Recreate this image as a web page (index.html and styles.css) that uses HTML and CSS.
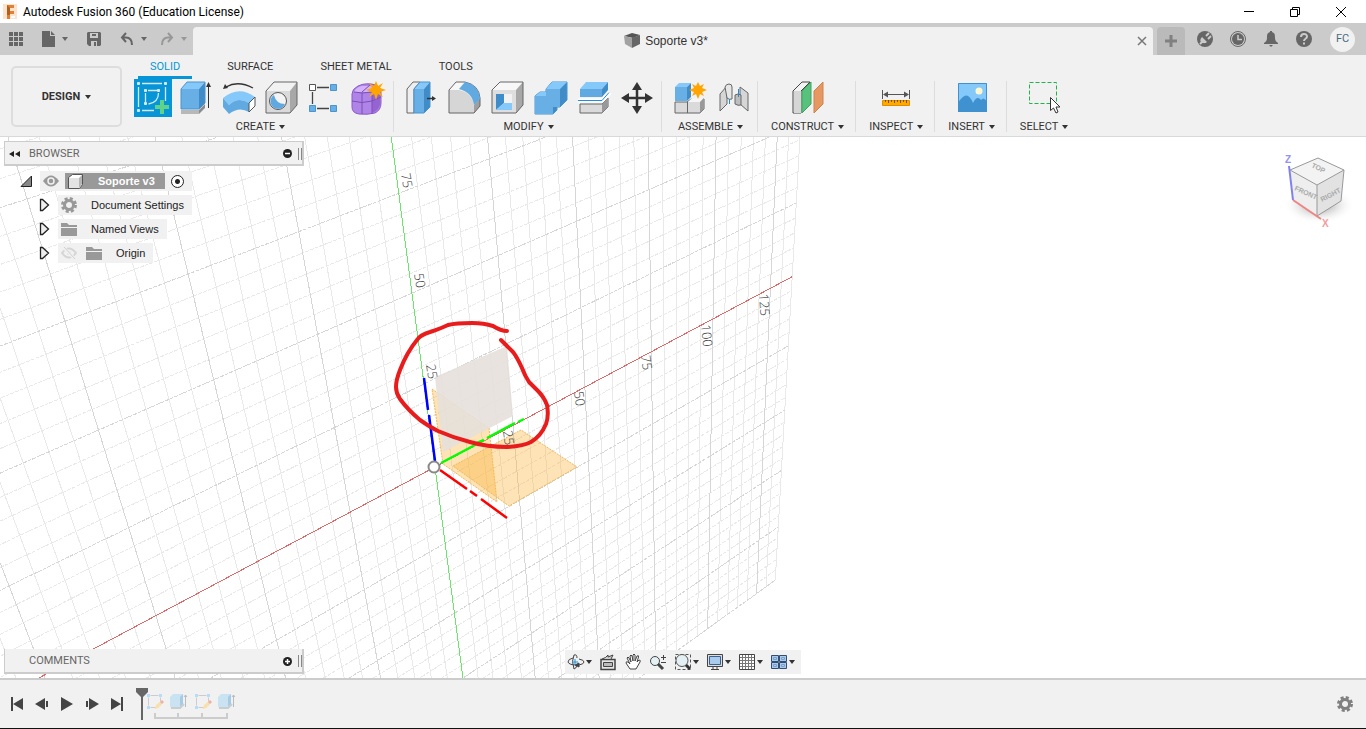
FILE: index.html
```html
<!DOCTYPE html>
<html lang="en">
<head>
    <meta charset="UTF-8">
    <meta name="viewport" content="width=device-width, initial-scale=1.0">
    <title>Autodesk Fusion 360 (Education License)</title>
    <link rel="stylesheet" href="styles.css">
</head>
<body>
    <header class="titlebar">
        <svg class="appIcon" width="16" height="16" viewBox="0 0 16 16">
            <path d="M0 0h14v15H0z" fill="#fbe3cd"/>
            <path d="M4 1h7v3H7v3h4v3H7v5H4z" fill="#dd8236"/>
            <path d="M4 1l3 3v7H4z" fill="#b4601c"/><path d="M8 12h4v2H8z" fill="#fff"/>
        </svg>
        <h1>Autodesk Fusion 360 (Education License)</h1>
        <div class="winBtns">
            <button aria-label="Minimize"><svg width="12" height="12"><path d="M1 5.500h10" stroke="#000"/></svg></button>
            <button aria-label="Restore"><svg width="12" height="12" fill="none" stroke="#000"><path d="M1.500 3.500h7v7h-7zM3.500 3V1.500h7v7H9"/></svg></button>
            <button aria-label="Close"><svg width="12" height="12"><path d="M1 1l10 10M11 1L1 11" stroke="#000"/></svg></button>
        </div>
    </header>

    <div class="tabStrip">
        <div class="quick">
            <button aria-label="Data panel"><svg width="14" height="14" fill="#666"><path d="M0 0h4v4H0zM5 0h4v4H5zM10 0h4v4h-4zM0 5h4v4H0zM5 5h4v4H5zM10 5h4v4h-4zM0 10h4v4H0zM5 10h4v4H5zM10 10h4v4h-4z"/></svg></button>
            <button aria-label="File"><svg width="13" height="16" fill="#666"><path d="M0 0h8v5h5v11H0z"/><path d="M9 0l4 4H9z"/></svg><span class="caret"></span></button>
            <button aria-label="Save"><svg width="14" height="14" fill="#666"><path fill-rule="evenodd" d="M1 0h12l1 1v12l-1 1H2l-2-2V1zM3 1v5h8V1zM4 9v5h6V9z"/><path d="M5 2h4v2H5zM7 10h2v4H7z"/></svg></button>
            <button aria-label="Undo"><svg width="14" height="14" fill="none" stroke="#666" stroke-width="2"><path d="M6 1L2 5.500 6 10M2 5.500h4q6 0 6 7.500"/></svg><span class="caret"></span></button>
            <button class="off" aria-label="Redo"><svg width="14" height="14" fill="none" stroke="#666" stroke-width="2"><path d="M8 1l4 4.500L8 10M12 5.500H8Q2 5.500 2 13"/></svg><span class="caret"></span></button>
        </div>
        <div class="docTab">
            <div class="docName">
                <svg width="16" height="16"><path d="M0 3l8-3 8 2-7 3z" fill="#555"/><path d="M0 3l8 2v10l-7-4z" fill="#a2a2a2"/><path d="M8 5l8-3v9l-8 4z" fill="#666"/></svg>
                <span>Soporte v3*</span>
            </div>
            <button aria-label="Close tab"><svg width="10" height="10"><path d="M1 1l8 8M9 1L1 9" stroke="#777" stroke-width="1.500"/></svg></button>
        </div>
        <button class="newTab" aria-label="New tab"><svg width="14" height="14"><path d="M7 1v12M1 7h12" stroke="#808080" stroke-width="3"/></svg></button>
        <div class="account">
            <button aria-label="Extensions"><svg width="16" height="16"><circle cx="8" cy="8" r="8" fill="#666"/><path d="M3 13l3-3M9 5l3-3M11 8l3-3" stroke="#cbcbcb" stroke-width="2"/><path d="M5 6l5 5c-2 2-5 1-6 0s-1-3 1-5z" fill="#cbcbcb"/></svg></button>
            <button aria-label="Job status"><svg width="16" height="16" fill="none"><circle cx="8" cy="8" r="7.500" stroke="#666"/><circle cx="8" cy="8" r="6" fill="#666"/><path d="M8 4v4.500h4" stroke="#cbcbcb" stroke-width="1.500"/></svg></button>
            <button aria-label="Notifications"><svg width="16" height="16" fill="#666"><path d="M7 0h2v1c3 1 3 3 3 6 0 2 1 4 3 5v1H1v-1c2-1 3-3 3-5 0-3 0-5 3-6zM6 14h4l-2 2z"/></svg></button>
            <button aria-label="Help"><svg width="16" height="16"><circle cx="8" cy="8" r="8" fill="#666"/><path d="M5 6c0-4 6-4 6-.500C11 8 8 7.500 8 10" fill="none" stroke="#cbcbcb" stroke-width="2"/><path d="M7 11.500h2v2H7z" fill="#cbcbcb"/></svg></button>
            <button class="avatar">FC</button>
        </div>
    </div>

    <div class="ribbon">
        <button class="workspace">DESIGN <span class="caret"></span></button>
        <div class="ribbonMain">
            <nav class="ribbonTabs">
                <a href="#" class="active">SOLID</a>
                <a href="#">SURFACE</a>
                <a href="#">SHEET METAL</a>
                <a href="#">TOOLS</a>
            </nav>
            <div class="groups">
                <section class="group">
                    <div class="tools">
                        <button class="picked" aria-label="Create sketch">
                            <svg width="38" height="38" fill="none" stroke="#d8e6ee">
                                <path d="M4.500 8v20M8 4.500h20M31.500 8v14M8 31.500h12M11.500 14v9M14 11.500h9M24.500 14c0 6-4 10-10 11" stroke-width="1.300"/>
                                <path d="M3.500 3.500h2v2h-2zM30.500 3.500h2v2h-2zM3.500 30.500h2v2h-2zM10.500 10.500h2v2h-2zM23.500 10.500h2v2h-2zM10.500 23.500h2v2h-2z" fill="#e4e4e4"/>
                                <path d="M28 21v14M21 28h14" stroke="#5fd38a" stroke-width="4"/>
                            </svg>
                        </button>
                        <button aria-label="Extrude">
                            <svg width="38" height="38" stroke-linejoin="round">
                                <path d="M4 31h18v4H4z" fill="#b8b8b8"/><path d="M22 31l6-6v4l-6 6z" fill="#8c8c8c"/>
                                <path d="M4 10h18v20H4z" fill="#68afe6"/><path d="M4 10l6-7h18l-6 7z" fill="#85c8fa"/><path d="M22 10l6-7v21l-6 6z" fill="#3f8cc8"/>
                                <path d="M4 30V10l6-7h18v21l-6 6z" fill="none" stroke="#4b94cd"/>
                                <path d="M31.500 29V6" stroke="#333"/><path d="M29 8l2.500-5L34 8z" fill="#333"/>
                            </svg>
                        </button>
                        <button aria-label="Revolve">
                            <svg width="38" height="38" stroke-linejoin="round">
                                <path d="M3 19Q19 6 35 18L29 24Q18 17 9 26z" fill="#85c8fa"/>
                                <path d="M3 19l6 7q9-9 20-2v9q-10-6-20 2l-6-7z" fill="#61aae1"/>
                                <path d="M29 24l6-6v9l-6 6z" fill="#fff" stroke="#555"/>
                                <path d="M6 8q12-7 27 1" fill="none" stroke="#333" stroke-width="1.300"/><path d="M3 10l2-5 3 4z" fill="#333"/>
                            </svg>
                        </button>
                        <button aria-label="Hole">
                            <svg width="38" height="38" stroke-linejoin="round">
                                <path d="M3 12l8-9h23l-7 9z" fill="#f2f2f2"/><path d="M3 12h24v22H3z" fill="#dadada"/><path d="M27 12l7-9v23l-7 8z" fill="#a8a8a8"/>
                                <path d="M3 34V12l8-9h23v23l-7 8z" fill="none" stroke="#666"/>
                                <circle cx="15" cy="22" r="8.500" fill="#f4f4f4" stroke="#555"/><path d="M11 16a7.500 7.500 0 1 0 11 9q-9 0-11-9z" fill="#5fa9e0"/>
                            </svg>
                        </button>
                        <button aria-label="Rectangular pattern">
                            <svg width="38" height="38">
                                <path d="M11 8.500h12M11 29.500h12M6.500 13v12" stroke="#444" stroke-width="1.300"/>
                                <path d="M3.500 5.500h6v6h-6z" fill="#fff" stroke="#555"/>
                                <path d="M24.500 5.500h6v6h-6zM3.500 26.500h6v6h-6zM24.500 26.500h6v6h-6z" fill="#68afe6" stroke="#4b94cd"/>
                            </svg>
                        </button>
                        <button aria-label="Create form">
                            <svg width="38" height="38">
                                <path d="M3 15q0-5 6-8 8-4 18-1 5 2 5 8v10q0 7-6 10-8 2-16 1-7-1-7-7z" fill="#b083e8" stroke="#8a5cc8"/>
                                <path d="M5 13q2-5 8-6h14q-2 5-7 6z" fill="#d3b1fb"/><path d="M23 14q5-1 8-6v18q-2 6-8 8z" fill="#9564d2"/>
                                <path d="M3 22q10 3 20 0l9-4M13 14v21M23 14v21M5 13q8 2 18 0M13 13l8-7" fill="none" stroke="#7b50b5"/>
                                <path d="M27 2l2 5 5-3-3 5 6 2-6 2 3 5-5-3-2 6-2-6-5 3 3-5-6-2 6-2-3-5 5 3z" fill="#ffa400"/>
                            </svg>
                        </button>
                    </div>
                    <button class="groupName">CREATE <span class="caret"></span></button>
                </section>

                <section class="group">
                    <div class="tools">
                        <button aria-label="Press pull">
                            <svg width="38" height="38" stroke-linejoin="round">
                                <path d="M5 34V10l6-7h7l-6 7v24z" fill="#eee" stroke="#666"/>
                                <path d="M12 10h10v24H12z" fill="#68afe6"/><path d="M12 10l6-7h10l-6 7z" fill="#85c8fa"/><path d="M22 10l6-7v25l-6 6z" fill="#3f8cc8"/>
                                <path d="M12 34V10l6-7h10v25l-6 6z" fill="none" stroke="#4b94cd"/>
                                <path d="M25 19.500h6" stroke="#333" stroke-width="1.500"/><path d="M30 17l4 2.500-4 2.500z" fill="#333"/>
                            </svg>
                        </button>
                        <button aria-label="Fillet">
                            <svg width="38" height="38" stroke-linejoin="round">
                                <path d="M4 34V11h10q14 3 15 17v6z" fill="#d6d6d6"/><path d="M4 11l7-8h9l-6 8z" fill="#f7f7f7"/><path d="M29 34l6-7v-8l-6 7z" fill="#9f9f9f"/>
                                <path d="M4 34V11l7-8h9q14 3 15 16v8l-6 7z" fill="none" stroke="#666"/>
                                <path d="M14 10l6-7q14 3 15 17l-6 6Q27 13 14 10z" fill="#61aae1"/>
                            </svg>
                        </button>
                        <button aria-label="Shell">
                            <svg width="38" height="38" stroke-linejoin="round">
                                <path d="M4 11l8-8h23l-7 8z" fill="#f7f7f7"/><path d="M4 11h24v23H4z" fill="#dedede"/><path d="M28 11l7-8v23l-7 8z" fill="#a8a8a8"/>
                                <path d="M4 34V11l8-8h23v23l-7 8z" fill="none" stroke="#666"/>
                                <path d="M8 15h16v16H8z" fill="#f2f2f2"/><path d="M8 15h8v9l-8 7z" fill="#3f8cc8"/><path d="M8 31l8-7h8v7z" fill="#85c8fa"/>
                            </svg>
                        </button>
                        <button aria-label="Combine">
                            <svg width="38" height="38" stroke-linejoin="round">
                                <path d="M4 17l5-4h6v-3l6-7h15v18l-7 7h-3v3l-4 4H4z" fill="#3f8cc8" stroke="#4b94cd"/>
                                <path d="M4 17h11v-7h14v18h-7v7H4z" fill="#68afe6"/>
                                <path d="M15 10l6-7h15l-7 7zM4 17l5-4h6v4z" fill="#85c8fa"/>
                            </svg>
                        </button>
                        <button aria-label="Split body">
                            <svg width="38" height="38" stroke-linejoin="round">
                                <path d="M6 10l6-7h22l-6 7z" fill="#85c8fa"/><path d="M6 10h22v8H6z" fill="#61aae1"/><path d="M28 10l6-7v8l-6 7z" fill="#3f8cc8"/>
                                <path d="M6 34v-9h22l6-6v9l-6 6z" fill="#dadada" stroke="#666"/><path d="M28 25l6-6v9l-6 6z" fill="#999"/>
                                <path d="M4 21.500h24l8-8" fill="none" stroke="#fff" stroke-width="4"/><path d="M4 21.500h24l7-8" fill="none" stroke="#1c8ede"/>
                            </svg>
                        </button>
                        <button aria-label="Move">
                            <svg width="38" height="38"><path d="M20 6v26M7 19h26" stroke="#333" stroke-width="2.500"/><path d="M20 3l5 8H15zM20 35l5-8H15zM4 19l8-5v10zM36 19l-8-5v10z" fill="#333"/></svg>
                        </button>
                    </div>
                    <button class="groupName">MODIFY <span class="caret"></span></button>
                </section>

                <section class="group">
                    <div class="tools">
                        <button aria-label="New component">
                            <svg width="38" height="38" stroke-linejoin="round">
                                <path d="M5 34V23h12l4-3h13v10l-4 4z" fill="#dadada" stroke="#666"/><path d="M18 23l4-4h12l-4 4z" fill="#f5f5f5"/><path d="M30 23l4-4v11l-4 4z" fill="#999"/><path d="M17.500 23v11" stroke="#666"/>
                                <path d="M5 8h12v14H5z" fill="#68afe6"/><path d="M5 8l4-4h12l-4 4z" fill="#85c8fa"/><path d="M17 8l4-4v14l-4 4z" fill="#3f8cc8"/>
                                <path d="M28 3l2 4 4-2-2 4 5 2-5 2 2 4-4-2-2 5-2-5-4 2 2-4-5-2 5-2-2-4 4 2z" fill="#ffa400"/>
                            </svg>
                        </button>
                        <button aria-label="Joint">
                            <svg width="38" height="38" stroke="#666" stroke-linejoin="round">
                                <path d="M7 32V15l7-8v18z" fill="#d6d6d6"/><path d="M12 8q1-3 4-3t3 3v12q-3 1-5-1z" fill="#e6e6e6"/>
                                <path d="M27 8l8 6v18l-8-7z" fill="#d6d6d6"/><path d="M22 16q3-2 6 0v10q-3 1-6-1z" fill="#bdbdbd"/>
                                <path d="M16.500 20v5M25.500 10v8" stroke="#1c8ede"/>
                            </svg>
                        </button>
                    </div>
                    <button class="groupName">ASSEMBLE <span class="caret"></span></button>
                </section>

                <section class="group">
                    <div class="tools">
                        <button aria-label="Offset plane">
                            <svg width="38" height="38" stroke-linejoin="round">
                                <path d="M4 34V12l9-9h8l-9 9v22z" fill="#f3f3f3" stroke="#444"/><path d="M5 12h7v22H5z" fill="#d6d6d6"/>
                                <path d="M13 12l9-9v22l-9 9z" fill="#58c27d" stroke="#3da563"/><path d="M25 12l9-9v22l-9 9z" fill="#e59862" stroke="#cd8350"/>
                            </svg>
                        </button>
                    </div>
                    <button class="groupName">CONSTRUCT <span class="caret"></span></button>
                </section>

                <section class="group">
                    <div class="tools">
                        <button aria-label="Measure">
                            <svg width="38" height="38">
                                <path d="M5.500 11v9M32.500 11v9M7 15.500h24" stroke="#555"/><path d="M6 15.500l5-3v6zM32 15.500l-5-3v6z" fill="#555"/>
                                <path d="M5.500 21.500h27v5h-27z" fill="#ffa800" stroke="#e08e00"/><path d="M8.500 21v2M11.500 21v3M14.500 21v2M17.500 21v3M20.500 21v2M23.500 21v3M26.500 21v2M29.500 21v3" stroke="#7a5200"/>
                            </svg>
                        </button>
                    </div>
                    <button class="groupName">INSPECT <span class="caret"></span></button>
                </section>

                <section class="group">
                    <div class="tools">
                        <button aria-label="Insert decal">
                            <svg width="38" height="38">
                                <path d="M5 4h29v29H5z" fill="#85c8fa"/><path d="M5 24q9-15 15 0 4-8 8-3 3-4 6 2v10H5z" fill="#3f92cf"/>
                                <circle cx="26" cy="12" r="3.500" fill="#fff8cf"/><path d="M5.500 4.500h28v28h-28z" fill="none" stroke="#3f92cf"/>
                            </svg>
                        </button>
                    </div>
                    <button class="groupName">INSERT <span class="caret"></span></button>
                </section>

                <section class="group">
                    <div class="tools">
                        <button aria-label="Select">
                            <svg width="38" height="38"><path d="M4.500 3.500h27v21h-27z" fill="none" stroke="#22b14c" stroke-dasharray="4 2"/><path d="M25.500 18.500v13l3-2.500 2.500 5 2-1-2-5h4z" fill="#fff" stroke="#333"/></svg>
                        </button>
                    </div>
                    <button class="groupName">SELECT <span class="caret"></span></button>
                </section>
            </div>
        </div>
    </div>

    <main class="canvas">
        <svg class="scene">
            <g transform="translate(0 -137)">
                <g id="grid"></g>
                <path class="plane" d="M432 389l57 39 8 74-54-38z"/>
                <path class="plane" d="M453 466l68-36 56 37-68 39z"/>
                <path d="M435 377l72-31 6 70-70 36z" fill="#e5e0db" fill-opacity=".9"/>
                <path d="M424 378l4 32M429 415l6 46" stroke="#00f" stroke-width="2.500"/>
                <path d="M441 463l34-18M477 443l7-3M487 438l28-15M518 422l6-3" stroke="#0f0" stroke-width="2.500"/>
                <path d="M440 470l27 19M470 491l7 5M481 499l26 19" stroke="#f00" stroke-width="2.500"/>
                <circle cx="434" cy="467" r="5.500" fill="#fff" stroke="#888" stroke-width="2"/>
                <g class="ticks">
                    <text transform="translate(401 174) rotate(80)">75</text>
                    <text transform="translate(414 274) rotate(80)">50</text>
                    <text transform="translate(426 365) rotate(80)">25</text>
                    <text transform="translate(503 431) rotate(82)">25</text>
                    <text transform="translate(574 392) rotate(82)">50</text>
                    <text transform="translate(641 356) rotate(82)">75</text>
                    <text transform="translate(701 325) rotate(84)">100</text>
                    <text transform="translate(759 294) rotate(86)">125</text>
                </g>
                <path class="marker" d="M507 331Q501 331 493 326 484 323 472 323 456 323 448 325 442 328 430 332 420 335 417 340 407 352 400 370 396 380 396 387 396 393 400 399 408 410 420 420 430 427 438 431 454 438 470 442 487 447 507 447 524 446 531 442 541 436 546 424 549 416 547 405 544 397 538 391L529 382Q525 376 522 368 517 357 513 352L506 345 501 340"/>
            </g>
        </svg>

        <aside class="browser">
            <div class="panelHead">
                <svg width="11" height="6" fill="#222"><path d="M0 3l5-3v6zM6 3l5-3v6z"/></svg>
                <h2>BROWSER</h2>
                <button aria-label="Collapse"><svg width="9" height="9"><circle cx="4.500" cy="4.500" r="4.500" fill="#222"/><path d="M2 4.500h5" stroke="#fff" stroke-width="1.500"/></svg></button>
                <i class="grip"></i>
            </div>
            <ul class="tree">
                <li class="root">
                    <button aria-label="Collapse"><svg width="13" height="13"><path d="M1 11.500L11.500 1v10.500z" fill="#888" stroke="#222"/></svg></button>
                    <div class="node">
                        <svg width="16" height="12"><path d="M0 6q8-11 16 0-8 11-16 0z" fill="#999"/><circle cx="8" cy="6" r="3" fill="none" stroke="#f1f1f1" stroke-width="1.500"/></svg>
                        <span class="rootName">
                            <svg width="17" height="16"><path d="M1.500 4.500l4-3h10v10l-3 4h-11z" fill="#fff" stroke="#555"/><path d="M2 5h10v10H2z" fill="#e3e3e3"/><path d="M12 5l3-3v9l-3 4z" fill="#b5b5b5"/></svg>
                            Soporte v3
                        </span>
                        <input type="radio" name="activeComponent" aria-label="Activate component" checked>
                    </div>
                </li>
                <li>
                    <button aria-label="Expand"><svg width="11" height="14"><path d="M1.500 1.500h2l6 5.500-6 5.500h-2z" fill="#eee" stroke="#222" stroke-width="1.300"/></svg></button>
                    <div class="node">
                        <svg width="16" height="16"><circle cx="8" cy="8" r="4.500" fill="none" stroke="#999" stroke-width="3"/><circle cx="8" cy="8" r="6.500" fill="none" stroke="#999" stroke-width="3" stroke-dasharray="3 2.100"/></svg>
                        <span>Document Settings</span>
                    </div>
                </li>
                <li>
                    <button aria-label="Expand"><svg width="11" height="14"><path d="M1.500 1.500h2l6 5.500-6 5.500h-2z" fill="#eee" stroke="#222" stroke-width="1.300"/></svg></button>
                    <div class="node">
                        <svg width="16" height="13" fill="#999"><path d="M0 0h6l2 2h8v2H0zM0 5h16v8H0z"/></svg>
                        <span>Named Views</span>
                    </div>
                </li>
                <li>
                    <button aria-label="Expand"><svg width="11" height="14"><path d="M1.500 1.500h2l6 5.500-6 5.500h-2z" fill="#eee" stroke="#222" stroke-width="1.300"/></svg></button>
                    <div class="node origin">
                        <svg width="16" height="12" fill="none"><path d="M1 6q7-9 14 0-7 9-14 0z" stroke="#d5d5d5" stroke-width="2"/><circle cx="8" cy="6" r="2" fill="#d5d5d5"/><path d="M2 0l12 12" stroke="#f1f1f1" stroke-width="3"/><path d="M3 0l11 12" stroke="#d0d0d0"/></svg>
                        <svg width="16" height="13" fill="#999"><path d="M0 0h6l2 2h8v2H0zM0 5h16v8H0z"/></svg>
                        <span>Origin</span>
                    </div>
                </li>
            </ul>
        </aside>

        <svg class="viewCube" width="80" height="86">
            <defs>
                <radialGradient id="shade"><stop offset="0" stop-color="#888"/><stop offset="1" stop-color="#fff" stop-opacity="0"/></radialGradient>
            </defs>
            <ellipse cx="39" cy="57" rx="36" ry="19" fill="url(#shade)"/>
            <path d="M10 22l28-12 26 12-27 15z" fill="#f3f3f3"/><path d="M10 22l27 15v31L12 52z" fill="#eeeeee"/><path d="M37 37l27-15-3 31-24 15z" fill="#e2e2e2"/>
            <path d="M10 22l28-12 26 12-27 15zM64 22l-3 31-24 15M37 37v31" fill="none" stroke="#999"/>
            <path d="M9 18l4 34" stroke="#8080ee" stroke-width="2"/><path d="M13 52l28 19" stroke="#ee8585" stroke-width="2"/>
            <text class="cubeText" transform="translate(31 19) rotate(26)">TOP</text>
            <text class="cubeText" transform="translate(14 42) rotate(24)">FRONT</text>
            <text class="cubeText" transform="translate(42 54) rotate(-28)">RIGHT</text>
            <text class="axisZ" x="5" y="15">Z</text>
            <text class="axisX" x="42" y="79">X</text>
        </svg>

        <div class="bottomRow">
            <div class="panelHead comments">
                <h2>COMMENTS</h2>
                <button aria-label="Expand comments"><svg width="9" height="9"><circle cx="4.500" cy="4.500" r="4.500" fill="#222"/><path d="M2 4.500h5M4.500 2v5" stroke="#fff" stroke-width="1.500"/></svg></button>
                <i class="grip"></i>
            </div>
            <div class="viewBar">
                <button aria-label="Orbit"><svg width="18" height="18" fill="none" stroke="#444"><path d="M7 2q-3 6 0 14M7 2q3-1 3 3M10 12q-1 4-3 4M6 5Q1 6 1 9q1 3 9 3M12 6q5 1 5 3t-5 3"/><path d="M8 12l4-2v4z" fill="#444"/><path d="M8 6v6M5 9h6" stroke="#1c8ede"/></svg><span class="caret"></span></button>
                <button aria-label="Look at"><svg width="18" height="18" fill="none" stroke="#444"><path d="M2 6.500h14v10H2z" fill="#e6e6e6" stroke-width="1.500"/><path d="M4.500 9.500h9v4h-9z" fill="#bbb"/><path d="M3 6q4-1 6-4v2l5-2-2 4" fill="#ccc"/></svg></button>
                <button aria-label="Pan"><svg width="18" height="18"><path d="M6 16L2 10q0-2 2-1l2 2-3-6q1-2 2 0l2 4-1-6q1-2 2 0l1 5V2q1-2 2 0v6l2-5q2-1 1.500 1L13 9l2-2q2 0 1 2l-4 7z" fill="#fff" stroke="#444"/></svg></button>
                <button aria-label="Zoom"><svg width="18" height="18" fill="none" stroke="#444"><circle cx="6" cy="8" r="4.500" fill="#e4f1f4"/><path d="M9 11l5 5" stroke-width="3"/><path d="M14.500 2v5M12 4.500h5M12 9.500h5"/></svg></button>
                <button aria-label="Fit"><svg width="18" height="18" fill="none" stroke="#555"><path d="M1.500 1.500h15v15h-15z" stroke-dasharray="3 2"/><circle cx="8" cy="7.500" r="6" fill="#e4f1f4"/><path d="M12 12l4 4" stroke="#333" stroke-width="3"/></svg><span class="caret"></span></button>
                <button aria-label="Display settings"><svg width="18" height="18" stroke="#444"><path d="M1.500 1.500h15v12h-15z" fill="#ddd"/><path d="M3.500 3.500h11v8h-11z" fill="#a9cbed" stroke="#3b6194"/><path d="M7 14v2M11 14v2M5 16.500h8"/></svg><span class="caret"></span></button>
                <button aria-label="Grid and snaps"><svg width="18" height="18" stroke="#777"><path d="M1.500 1.500h15v15h-15z" fill="#fff" stroke="#444"/><path d="M4.500 2v14M7.500 2v14M10.500 2v14M13.500 2v14M2 4.500h14M2 7.500h14M2 10.500h14M2 13.500h14"/></svg><span class="caret"></span></button>
                <button aria-label="Viewports"><svg width="18" height="18" fill="#a9cbed" stroke="#344d73"><path d="M1.500 2.500h7v6h-7zM9.500 2.500h7v6h-7zM1.500 9.500h7v6h-7zM9.500 9.500h7v6h-7z"/><path d="M3.500 4.500h3v2h-3zM11.500 4.500h3v2h-3zM3.500 11.500h3v2h-3zM11.500 11.500h3v2h-3z" stroke="#7c9fc8"/></svg><span class="caret"></span></button>
            </div>
        </div>
    </main>

    <footer class="timeline">
        <div class="player">
            <button aria-label="Go to start"><svg width="14" height="14" fill="#444"><path d="M1 0h2v14H1zM13 1v12L3 7z"/></svg></button>
            <button aria-label="Step back"><svg width="14" height="14" fill="#444"><path d="M10 1v12L0 7zM11 4h2v6h-2z"/></svg></button>
            <button aria-label="Play"><svg width="14" height="14" fill="#444"><path d="M1 0l12 7-12 7z"/></svg></button>
            <button aria-label="Step forward"><svg width="14" height="14" fill="#444"><path d="M4 1v12l10-6zM1 4h2v6H1z"/></svg></button>
            <button aria-label="Go to end"><svg width="14" height="14" fill="#444"><path d="M11 0h2v14h-2zM1 1v12l10-6z"/></svg></button>
        </div>
        <svg class="history" width="106" height="34">
            <g id="historyItems" fill="none">
                <path d="M13.500 8.500h12v12h-12z" stroke="#ccc" stroke-dasharray="8 4" stroke-dashoffset="-2"/><path d="M12 7h3v3h-3zM24 7h3v3h-3zM12 19h3v3h-3z" fill="#b7dcf5"/><path d="M20 22l1-4 5-4 2 2-5 5z" fill="#f8dfae"/><path d="M25 15l2 2 2-2-2-2z" fill="#efb0ac"/>
                <path d="M36 21h9l4-4" stroke="#ccc" stroke-width="2"/><path d="M35 10l3-3h10v10l-3 3H35z" fill="#c9e3f2"/><path d="M45 10l3-3v10l-3 3z" fill="#a5cbe5"/><path d="M50.500 20V8M49 10l1.500-2L52 10" stroke="#bbb"/>
            </g>
            <use href="#historyItems" x="48"/>
            <path d="M20 26v5h72v-5M43 26v5M67 26v5" fill="none" stroke="#ccc" stroke-width="2"/>
            <path d="M1 1h12v4l-5 5v23H6V10L1 5z" fill="#666"/>
        </svg>
        <button class="settings" aria-label="Timeline settings"><svg width="18" height="18" fill="none" stroke="#808080"><circle cx="9" cy="9" r="4.500" stroke-width="3"/><circle cx="9" cy="9" r="6.500" stroke-width="3" stroke-dasharray="3 2.100"/></svg></button>
    </footer>
    <script src="script.js"></script>
</body>
</html>
```
FILE: styles.css
```css
*{
    margin: 0;
    padding: 0;
    box-sizing: border-box;
}
body{
    display: flex;
    flex-direction: column;
    height: 100vh;
    overflow: hidden;
    font: 11px/16px Roboto, "Liberation Sans", sans-serif;
    color: #333;
    background: #fff;
}
button{
    display: flex;
    align-items: center;
    justify-content: center;
    border: 0;
    background: none;
    font: inherit;
    color: inherit;
}
svg{
    display: block;
    flex: none;
}
h1, h2{
    font: inherit;
}
a{
    color: inherit;
    text-decoration: none;
}
.caret{
    border: 3px solid transparent;
    border-top: 4px solid #333;
    border-bottom: 0;
}

/* title bar */
.titlebar{
    display: flex;
    align-items: center;
    height: 23px;
    padding-left: 3px;
    gap: 4px;
}
.titlebar h1{
    font: 12px/16px Roboto, "Open Sans", sans-serif;
    color: #000;
}
.winBtns{
    display: flex;
    margin-left: auto;
    padding-right: 2px;
}
.winBtns button{
    width: 46px;
    height: 22px;
}

/* document tabs */
.tabStrip{
    display: flex;
    align-items: center;
    height: 32px;
    background: #cbcbcb;
}
.quick{
    display: flex;
    gap: 19px;
    width: 193px;
    padding-left: 9px;
}
.quick button{
    gap: 7px;
}
.quick button:nth-child(n+4){
    margin-right: -6px;
}
.quick .caret{
    border-top-color: #666;
}
.quick .off{
    opacity: .5;
}
.docTab{
    flex: 1;
    display: flex;
    align-items: center;
    align-self: flex-end;
    height: 28px;
    padding-right: 6px;
    background: #f1f1f1;
    border-radius: 4px 4px 0 0;
}
.docName{
    flex: 1;
    display: flex;
    align-items: center;
    justify-content: center;
    gap: 5px;
    padding-left: 2px;
    font: 12px/16px "Liberation Sans", sans-serif;
}
.docTab button{
    width: 10px;
}
.newTab{
    align-self: flex-end;
    width: 28px;
    height: 28px;
    margin-left: 4px;
    background: #bababa;
    border-radius: 4px 4px 0 0;
}
.account{
    display: flex;
    align-items: center;
    gap: 17px;
    padding: 0 11px 0 12px;
}
.account .avatar{
    width: 25px;
    height: 25px;
    margin-left: 1px;
    border-radius: 50%;
    background: #f1f1f1;
    color: #4a6a7c;
}

/* ribbon */
.ribbon{
    display: flex;
    height: 82px;
    background: #f1f1f1;
    border-bottom: 1px solid #d9d9d9;
}
.workspace{
    gap: 5px;
    width: 111px;
    height: 61px;
    margin: 11px 4px 0 11px;
    border: 2px solid #ddd;
    border-radius: 5px;
    font-weight: bold;
}
.ribbonMain{
    flex: 1;
}
.ribbonTabs{
    display: flex;
    gap: 23px;
    padding-left: 12px;
}
.ribbonTabs a{
    height: 24px;
    padding: 4px 12px 0;
    border-bottom: 3px solid transparent;
}
.ribbonTabs .active{
    color: #0696d7;
    border-color: #0696d7;
}
.groups{
    display: flex;
}
.group{
    display: flex;
    flex-direction: column;
    align-items: center;
    padding: 0 7px 0 8px;
    height: 57px;
    background: linear-gradient(#ddd, #ddd) right 2px / 1px 51px no-repeat;
}
.group:last-child{
    background: none;
}
.tools{
    display: flex;
    gap: 5px;
}
.tools .picked{
    background: #0696d7;
}
.groupName{
    gap: 4px;
    padding: 2px 5px 0;
}

/* canvas */
.canvas{
    flex: 1;
    display: flex;
    flex-direction: column;
    justify-content: space-between;
    position: relative;
    min-height: 0;
    padding: 4px;
    overflow: hidden;
}
.scene{
    position: absolute;
    left: 0;
    top: 0;
    width: 100%;
    height: 100%;
}
#grid{
    shape-rendering: crispEdges;
}
.minor{
    stroke: #e9e9e9;
}
.cross{
    stroke-dasharray: 4 1;
}
.major{
    stroke: #d6d6d6;
}
.axisRed{
    stroke: #dc6c6c;
}
.axisGreen{
    stroke: #6be66b;
}
.plane{
    fill: #fbb53c;
    fill-opacity: .38;
    stroke: #f0b95c;
    stroke-dasharray: 2 1;
}
.ticks{
    font: 13px "Open Sans", sans-serif;
    font-weight: 300;
    fill: #333;
}
.marker{
    fill: none;
    stroke: #e81c1c;
    stroke-width: 4;
    stroke-linecap: round;
    stroke-linejoin: round;
}
.browser{
    position: relative;
    width: 300px;
}
.panelHead{
    display: flex;
    align-items: center;
    height: 25px;
    padding: 1px 0 0 4px;
    background: #f1f1f1;
    border: 1px solid #ccc;
    border-width: 1px 2px 2px 1px;
    color: #666;
}
.panelHead h2{
    flex: 1;
    padding-left: 9px;
}
.grip{
    width: 4px;
    height: 12px;
    margin-left: 6px;
    border: 1px solid #888;
    border-width: 0 1px;
}
.tree{
    list-style: none;
    padding-top: 5px;
    font: 11px/16px "Liberation Sans", sans-serif;
    color: #222;
}
.tree li{
    display: flex;
    align-items: center;
    gap: 8px;
    height: 20px;
    margin-bottom: 4px;
    padding-left: 35px;
}
.tree .root{
    padding-left: 16px;
    gap: 7px;
}
.node{
    display: flex;
    align-items: center;
    gap: 14px;
    height: 20px;
    padding: 0 8px 0 3px;
    background: #f1f1f1;
}
.root .node{
    gap: 6px;
}
.origin svg + svg{
    margin-left: -5px;
}
.rootName{
    display: flex;
    align-items: center;
    gap: 14px;
    height: 16px;
    padding: 0 10px 0 2px;
    background: #999;
    color: #fff;
    font-weight: bold;
}
.root input{
    appearance: none;
    width: 13px;
    height: 13px;
    border: 1px solid #222;
    border-radius: 50%;
    background: radial-gradient(#222 0 2px, #fff 3px);
}
.viewCube{
    position: absolute;
    top: 11px;
    right: 6px;
}
.cubeText{
    font: bold 7px "Liberation Sans", sans-serif;
    fill: #aaa;
}
.axisZ, .axisX{
    font: bold 10px "Liberation Sans", sans-serif;
    fill: #9494ee;
}
.axisX{
    fill: #f29c9c;
}
.bottomRow{
    position: relative;
    display: grid;
    grid-template-columns: 1fr auto 1fr;
    align-items: end;
}
.comments{
    width: 300px;
    border-top: 0;
}
.comments h2{
    padding-left: 20px;
}
.viewBar{
    display: flex;
    align-items: center;
    gap: 7px;
    height: 24px;
    padding: 0 6px 0 2px;
    background: #f1f1f1;
}
.viewBar button{
    gap: 1px;
}

/* timeline */
.timeline{
    display: flex;
    align-items: center;
    height: 51px;
    background: #f1f1f1;
    border-top: 2px solid #ccc;
    border-bottom: 1px solid #111;
}
.player{
    display: flex;
    gap: 11px;
    padding-left: 10px;
}
.history{
    margin-left: 11px;
}
.settings{
    margin-left: auto;
    padding-right: 12px;
}
```
FILE: script.js
```js
var grid = document.getElementById("grid");
var ns = "http://www.w3.org/2000/svg";

// perspective projection of a point on the sketch plane
function project(u, v){
    var d = 1 + 0.001691*u - 0.001725*v;
    return [435 + (3.25*u - 0.421*v)/d, 467 + (-1.731*u - 3.1765*v)/d];
}

function addLine(u1, v1, u2, v2, name){
    var a = project(u1, v1);
    var b = project(u2, v2);
    var line = document.createElementNS(ns, "line");
    line.setAttribute("x1", a[0].toFixed(1));
    line.setAttribute("y1", a[1].toFixed(1));
    line.setAttribute("x2", b[0].toFixed(1));
    line.setAttribute("y2", b[1].toFixed(1));
    line.setAttribute("class", name);
    grid.appendChild(line);
}

// minor lines every 5mm, major lines every 25mm
function drawGrid(major){
    for(var u = -225; u <= 135; u += 5){
        if(u != 0 && (u % 25 == 0) == major){
            addLine(u, -125, u, 150, major ? "major" : "minor");
        }
    }
    for(var v = -125; v <= 150; v += 5){
        if(v != 0 && (v % 25 == 0) == major){
            addLine(-225, v, 135, v, major ? "major cross" : "minor cross");
        }
    }
}

drawGrid(false);
drawGrid(true);
addLine(-225, 0, 135, 0, "axisRed");
addLine(0, -125, 0, 150, "axisGreen");
```
